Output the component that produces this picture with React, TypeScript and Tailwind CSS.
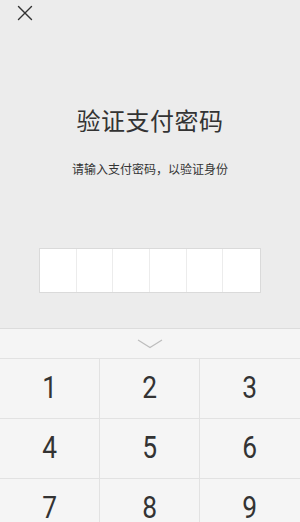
import { X } from 'lucide-react';

const cjk = { fontFamily: '"Noto Sans CJK SC", "Noto Sans", sans-serif' };

export default function App() {
  const keys = ['1', '2', '3', '4', '5', '6', '7', '8', '9'];

  return (
    <div className="w-[300px] h-[522px] overflow-hidden flex flex-col bg-[#ececec]" style={cjk}>
      {/* Header */}
      <div className="h-[28px] flex items-center pl-[12px]">
        <X className="w-[26px] h-[26px] text-[#333]" strokeWidth={1.3} />
      </div>

      <div className="flex flex-col items-center">
        <h1 className="mt-[76px] text-[24px] leading-[36px] text-[#333] tracking-[0.5px]">验证支付密码</h1>
        <p className="mt-[22px] text-[12px] leading-[18px] text-[#333]">请输入支付密码，以验证身份</p>

        <div className="mt-[70px] w-[222px] h-[45px] grid grid-cols-6 bg-white border border-[#dadada]">
          {[0, 1, 2, 3, 4, 5].map((i) => (
            <div key={i} className={i < 5 ? 'border-r border-[#ececec]' : ''} />
          ))}
        </div>
      </div>

      {/* Keyboard */}
      <div className="mt-[35px] flex-1 bg-[#f5f5f5] border-t border-[#dcdcdc]">
        <div className="h-[30px] flex items-center justify-center border-b border-[#e2e2e2]">
          <svg width="26" height="10" viewBox="0 0 26 10" fill="none">
            <path d="M1 1 L13 8.5 L25 1" stroke="#bdbdbd" strokeWidth="1.2" />
          </svg>
        </div>
        <div className="grid grid-cols-3">
          {keys.map((k, i) => (
            <div
              key={k}
              className={`h-[60px] flex items-center justify-center border-b border-[#e2e2e2] ${
                i % 3 < 2 ? 'border-r' : ''
              }`}
            >
              <span
                className="text-[31px] font-normal text-[#333] scale-x-[0.85]"
                style={{ fontFamily: 'Roboto, sans-serif' }}
              >
                {k}
              </span>
            </div>
          ))}
        </div>
      </div>
    </div>
  );
}
